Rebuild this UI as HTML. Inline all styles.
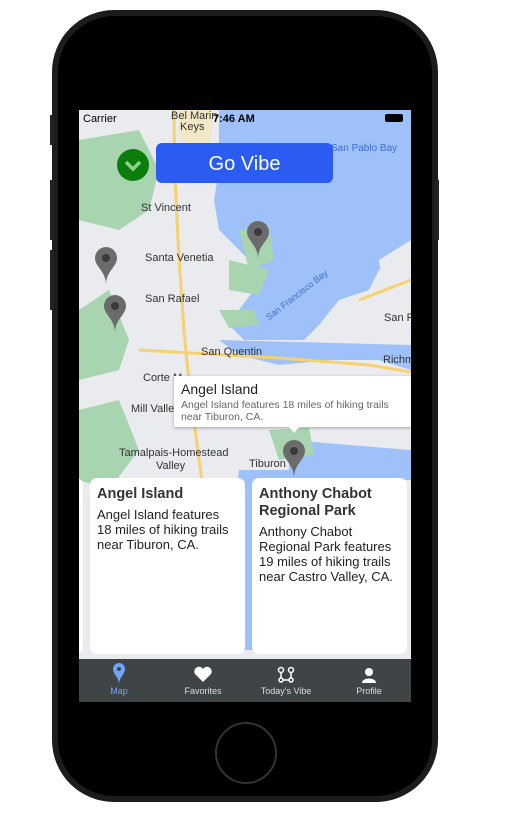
<!DOCTYPE html>
<html><head><style>
body{margin:0;width:517px;height:840px;background:#fff;position:relative;overflow:hidden;font-family:"Liberation Sans",sans-serif}
.phone{position:absolute;left:52px;top:10px;width:386px;height:792px;background:#1c1c1c;border-radius:62px}
.inner{position:absolute;left:58px;top:16px;width:374px;height:780px;background:#000;border-radius:56px}
.screen{position:absolute;left:79px;top:110px;width:332px;height:592px;overflow:hidden;background:#e9ebee}
.lbl{position:absolute;font-size:11px;color:#333;white-space:nowrap}
.card{position:absolute;top:368px;height:176px;background:#fff;border-radius:7px}
.card h3{margin:0;font-size:14.5px;font-weight:bold;color:#333;line-height:17px}
.card p{margin:4px 0 0;font-size:13px;color:#222;line-height:15px}
.tab{position:absolute;top:549px;left:0;width:332px;height:43px;background:#3f4547}
.t{position:absolute;top:27px;font-size:9px;color:#ddd;text-align:center;width:80px}
</style></head><body>
<div class="phone"></div><div class="inner"></div>
<div style="position:absolute;left:50px;top:115px;width:4px;height:30px;background:#222"></div>
<div style="position:absolute;left:50px;top:180px;width:4px;height:60px;background:#222"></div>
<div style="position:absolute;left:50px;top:250px;width:4px;height:60px;background:#222"></div>
<div style="position:absolute;left:435px;top:180px;width:4px;height:60px;background:#222"></div>
<div style="position:absolute;left:215px;top:722px;width:58px;height:58px;border-radius:50%;border:2px solid #333"></div>
<div class="screen">
<svg width="332" height="592" style="position:absolute;left:0;top:0">
<path d="M140 0 L332 0 L332 150 L300 160 L290 180 L260 190 L240 215 L225 230 L165 230 L150 215 L160 200 L175 180 L180 160 L160 140 L140 120 L135 90 L140 60 Z" fill="#9dc1f8"/>
<path d="M140 230 L332 235 L332 260 L300 250 L250 250 L200 255 L160 245 Z" fill="#9dc1f8"/>
<path d="M210 330 L270 335 L332 340 L332 370 L210 370 Z" fill="#9dc1f8"/>
<path d="M160 360 L250 360 L260 540 L140 540 Z" fill="#9dc1f8"/>
<path d="M300 150 L332 130 L332 230 L310 220 Z" fill="#e9ebee"/>
<path d="M0 30 L60 20 L80 60 L70 100 L40 120 L0 110 Z" fill="#a8d5b0"/>
<path d="M0 200 L30 180 L50 230 L40 260 L0 270 Z" fill="#a8d5b0"/>
<path d="M0 300 L40 290 L60 340 L30 380 L0 370 Z" fill="#a8d5b0"/>
<path d="M160 120 L190 115 L195 150 L170 160 Z" fill="#a8d5b0"/>
<path d="M150 150 L190 160 L180 185 L150 180 Z" fill="#a8d5b0"/>
<path d="M100 0 L135 0 L130 40 L100 30 Z" fill="#f3e8c6"/>
<path d="M140 200 L175 200 L180 215 L150 218 Z" fill="#a8d5b0"/>
<path d="M190 320 L230 318 L235 345 L200 350 Z" fill="#a8d5b0"/>
<path d="M95 0 C95 80 100 150 105 220 C110 280 120 350 130 420" stroke="#f7d070" stroke-width="3" fill="none"/>
<path d="M60 240 L200 248 L290 255 L332 262" stroke="#f7d070" stroke-width="3" fill="none"/>
<path d="M280 190 L332 170" stroke="#f7d070" stroke-width="3" fill="none"/>
</svg>
<div class="lbl" style="left:4px;top:3px;color:#000">Carrier</div>
<div class="lbl" style="left:92px;top:0px">Bel Marin</div>
<div class="lbl" style="left:101px;top:11px">Keys</div>
<div class="lbl" style="left:134px;top:3px;color:#000;font-weight:bold">7:46 AM</div>
<div style="position:absolute;left:306px;top:4px;width:18px;height:8px;background:#000;border-radius:2px"></div>
<div class="lbl" style="left:252px;top:33px;color:#3a6fd6;font-size:10px">San Pablo Bay</div>
<div class="lbl" style="left:62px;top:92px">St Vincent</div>
<div class="lbl" style="left:66px;top:142px">Santa Venetia</div>
<div class="lbl" style="left:66px;top:183px">San Rafael</div>
<div class="lbl" style="left:122px;top:236px">San Quentin</div>
<div class="lbl" style="left:64px;top:262px">Corte M</div>
<div class="lbl" style="left:52px;top:293px">Mill Valley</div>
<div class="lbl" style="left:40px;top:337px">Tamalpais-Homestead</div>
<div class="lbl" style="left:77px;top:350px">Valley</div>
<div class="lbl" style="left:170px;top:348px">Tiburon</div>
<div class="lbl" style="left:305px;top:202px">San R</div>
<div class="lbl" style="left:304px;top:244px">Richm</div>
<div class="lbl" style="left:180px;top:180px;color:#3a6fd6;font-size:9px;transform:rotate(-38deg)">San Francisco Bay</div>
<div style="position:absolute;left:38px;top:39px;width:32px;height:32px;border-radius:50%;background:#0b7d0b"><svg width="32" height="32"><path d="M9 13 L16 20 L23 13" stroke="#8fd08f" stroke-width="3.5" fill="none"/></svg></div>
<div style="position:absolute;left:77px;top:33px;width:177px;height:40px;background:#2a5cf2;border-radius:6px;color:#fff;font-size:20px;text-align:center;line-height:42px">Go Vibe</div>
<svg width="332" height="592" style="position:absolute;left:0;top:0">
<g fill="#6b6b6b"><path d="M16 148 a11 11 0 0 1 22 0 c0 9 -11 13 -11 27 c0 -14 -11 -18 -11 -27z"/><path d="M25 196 a11 11 0 0 1 22 0 c0 9 -11 13 -11 27 c0 -14 -11 -18 -11 -27z"/><path d="M168 122 a11 11 0 0 1 22 0 c0 9 -11 13 -11 27 c0 -14 -11 -18 -11 -27z"/><path d="M204 341 a11 11 0 0 1 22 0 c0 9 -11 13 -11 27 c0 -14 -11 -18 -11 -27z"/></g>
<g fill="#3a3a3a"><circle cx="27" cy="148" r="4"/><circle cx="36" cy="196" r="4"/><circle cx="179" cy="122" r="4"/><circle cx="215" cy="341" r="4"/></g>
</svg>
<div style="position:absolute;left:95px;top:266px;width:237px;height:51px;background:#fff;box-shadow:0 1px 3px rgba(0,0,0,.3)">
<div style="font-size:14px;color:#222;margin:5px 0 0 7px">Angel Island</div>
<div style="font-size:10.5px;color:#666;margin:2px 0 0 7px;line-height:12px">Angel Island features 18 miles of hiking trails near Tiburon, CA.</div></div>
<div style="position:absolute;left:209px;top:316px;width:0;height:0;border-left:6px solid transparent;border-right:6px solid transparent;border-top:7px solid #fff"></div>
<div class="card" style="left:-20px;width:24px"></div>
<div class="card" style="left:11px;width:155px;padding:8px 12px 8px 7px;box-sizing:border-box"><h3>Angel Island</h3><p>Angel Island features 18 miles of hiking trails near Tiburon, CA.</p></div>
<div class="card" style="left:173px;width:155px;padding:8px 7px;box-sizing:border-box"><h3>Anthony Chabot Regional Park</h3><p>Anthony Chabot Regional Park features 19 miles of hiking trails near Castro Valley, CA.</p></div>
<div class="tab">
<svg width="332" height="43" style="position:absolute;left:0;top:0">
<path d="M34 10 a6 6 0 0 1 12 0 c0 5 -6 9 -6 15 c0 -6 -6 -10 -6 -15z" fill="#6fa3f5"/><circle cx="40" cy="10" r="2" fill="#3f4547"/>
<path d="M124 23 L116 15 a4.5 4.5 0 0 1 8 -5 a4.5 4.5 0 0 1 8 5z" fill="#fff"/>
<g stroke="#fff" stroke-width="1.5" fill="none"><circle cx="202" cy="11" r="2.5"/><circle cx="212" cy="11" r="2.5"/><circle cx="202" cy="21" r="2"/><circle cx="212" cy="21" r="2"/><path d="M204 21 H210 M202 13.5 V19 M212 13.5 V19"/></g>
<circle cx="290" cy="13" r="4" fill="#fff"/><path d="M283 24 c0 -6 14 -6 14 0z" fill="#fff"/>
</svg>
<div class="t" style="left:0;color:#6fa3f5">Map</div>
<div class="t" style="left:84px">Favorites</div>
<div class="t" style="left:167px">Today's Vibe</div>
<div class="t" style="left:250px">Profile</div>
</div>
</div>
</body></html>
